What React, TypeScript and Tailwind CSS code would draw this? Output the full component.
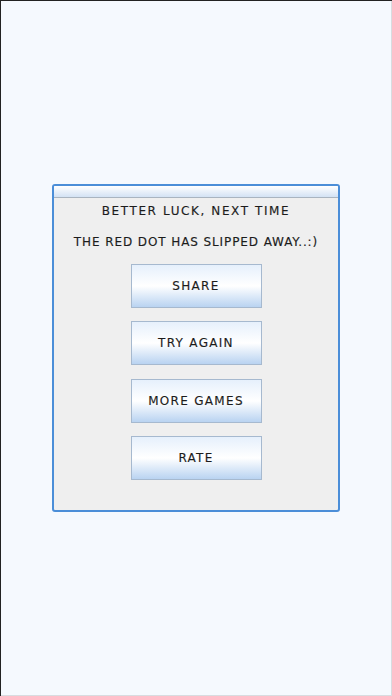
const font = { fontFamily: '"DejaVu Sans", Verdana, sans-serif' };

function MenuButton({ label }: { label: string }) {
  return (
    <button
      className="h-[44px] w-[131px] border border-[#a6b9cf] bg-gradient-to-b from-[#e6f0fc] via-[#ffffff] to-[#b9d3f1] text-[12px] tracking-[1.3px] text-[#1c1c1c] [-webkit-text-stroke:0.15px_#1c1c1c]"
      style={font}
    >
      {label}
    </button>
  );
}

export default function App() {
  return (
    <div className="flex h-[696px] w-[392px] items-center justify-center bg-[#f5f9fe] shadow-[inset_1px_1px_0_#222,inset_-1px_-1px_0_#d8dce0]">
      <div className="flex h-[328px] w-[288px] flex-col overflow-hidden rounded-[3px] border-2 border-[#4b8ed8] bg-[#efefef]">
        {/* title bar */}
        <div className="h-[12px] border-b border-[#a9b4c0] bg-gradient-to-b from-[#ffffff] to-[#d3e2f4]" />

        <div className="flex flex-col items-center pt-[5px] text-[#1c1c1c] [-webkit-text-stroke:0.15px_#1c1c1c]" style={font}>
          <p className="text-[12px] leading-[16px] tracking-[1.6px]">BETTER LUCK, NEXT TIME</p>
          <p className="mt-[15px] text-[12px] leading-[16px] tracking-[0.9px]">THE RED DOT HAS SLIPPED AWAY..:)</p>

          <div className="mt-[14px] flex flex-col gap-[13.3px]">
            <MenuButton label="SHARE" />
            <MenuButton label="TRY AGAIN" />
            <MenuButton label="MORE GAMES" />
            <MenuButton label="RATE" />
          </div>
        </div>
      </div>
    </div>
  );
}
